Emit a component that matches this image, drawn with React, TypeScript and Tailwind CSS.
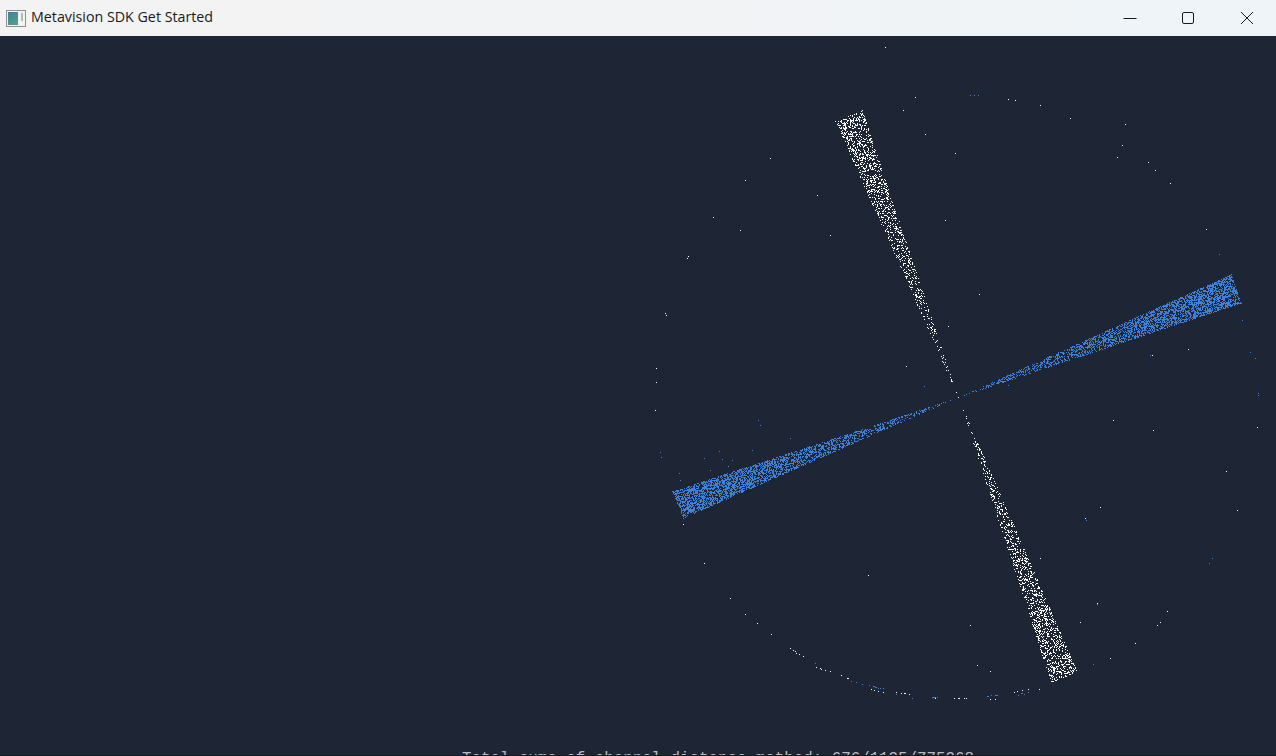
import { useMemo } from "react";

type Pt = [number, number];

const CENTER: Pt = [958, 397];

// stray events around the disc edge, read off the capture
const WHITE_DOTS: Pt[] = [
  [885, 47], [915, 97], [903, 110], [925, 134], [955, 153], [1008, 99], [1015, 100], [1040, 105], [1070, 118],
  [1125, 124], [1122, 145], [1117, 157], [1148, 162], [1155, 170], [1170, 183], [770, 158], [745, 180], [817, 195],
  [713, 217], [740, 230], [830, 235], [945, 220], [687, 258], [688, 256], [1206, 229], [665, 313], [666, 315], [656, 368],
  [656, 382], [655, 410], [979, 294], [948, 326], [906, 366], [1152, 355], [1188, 349], [1113, 420], [1153, 430],
  [1257, 427], [1226, 471], [1237, 510], [1100, 507], [1085, 518], [1040, 558], [868, 575], [704, 563], [683, 524],
  [730, 598], [745, 614], [757, 623], [771, 634], [970, 625], [1097, 603], [1160, 622], [1157, 625], [1167, 611],
  [1135, 643], [1110, 658], [1080, 622], [790, 648], [793, 650], [795, 651], [796, 653], [799, 654], [803, 656],
  [816, 667], [820, 668], [821, 669], [825, 670], [830, 671], [841, 675], [847, 678], [848, 678], [871, 689], [874, 690],
  [878, 691], [883, 692], [896, 692], [901, 693], [904, 693], [905, 693], [909, 694], [935, 698], [954, 698], [958, 698],
  [959, 698], [964, 698], [966, 698], [990, 699], [995, 699], [1014, 692], [1017, 691], [1022, 690], [1028, 689],
  [1039, 689], [977, 665], [990, 671],
];

const BLUE_DOTS: Pt[] = [
  [970, 95], [974, 95], [978, 95], [1250, 352], [1255, 358], [1258, 393], [1258, 395], [1242, 320], [1219, 254],
  [660, 452], [661, 457], [704, 458], [719, 451], [722, 459], [732, 460], [728, 466], [710, 470], [679, 473], [680, 480],
  [752, 450], [758, 420], [760, 425], [790, 438], [1212, 558], [1209, 563], [924, 386], [1008, 385], [1097, 604],
  [1093, 664], [815, 663], [851, 681], [856, 682], [862, 684], [869, 685], [873, 686], [874, 686], [875, 687], [876, 687],
  [878, 688], [880, 688], [883, 688], [896, 694], [912, 698], [932, 697], [933, 697], [934, 697], [935, 697], [937, 697],
  [987, 696], [988, 696], [991, 695], [995, 695], [996, 695], [997, 695], [1018, 695], [1021, 693], [1022, 693], [1024, 694],
  [1028, 692], [1150, 355], [1086, 520],
];

// small seeded generator so the noise is the same on every render
function makeRandom(seed: number) {
  let a = seed;
  return () => {
    a = (a + 0x6d2b79f5) | 0;
    let t = Math.imul(a ^ (a >>> 15), 1 | a);
    t = (t + Math.imul(t ^ (t >>> 7), 61 | t)) ^ t;
    return ((t ^ (t >>> 14)) >>> 0) / 4294967296;
  };
}

function inTriangle(p: Pt, a: Pt, b: Pt, c: Pt) {
  const side = (u: Pt, v: Pt) => (p[0] - v[0]) * (u[1] - v[1]) - (u[0] - v[0]) * (p[1] - v[1]);
  const d1 = side(a, b);
  const d2 = side(b, c);
  const d3 = side(c, a);
  return !((d1 < 0 || d2 < 0 || d3 < 0) && (d1 > 0 || d2 > 0 || d3 > 0));
}

function wedge(b: Pt, c: Pt, density: number, rand: () => number) {
  const pts: Pt[] = [];
  const xs = [CENTER[0], b[0], c[0]];
  const ys = [CENTER[1], b[1], c[1]];
  const len = Math.hypot(b[0] - CENTER[0], b[1] - CENTER[1]);
  for (let y = Math.min(...ys); y <= Math.max(...ys); y++) {
    for (let x = Math.min(...xs); x <= Math.max(...xs); x++) {
      if (!inTriangle([x, y], CENTER, b, c)) continue;
      // thins out towards the hub
      const t = Math.hypot(x - CENTER[0], y - CENTER[1]) / len;
      if (rand() < density * (0.5 + 0.5 * t)) pts.push([x, y]);
    }
  }
  return pts;
}

function toPath(pts: Pt[]) {
  return pts.map(([x, y]) => `M${x} ${y}h1v1h-1z`).join("");
}

function EventView() {
  const { white, blue } = useMemo(() => {
    const rand = makeRandom(1276);
    return {
      white: toPath([
        ...wedge([835, 121], [862, 110], 0.32, rand),
        ...wedge([1051, 683], [1077, 671], 0.32, rand),
        ...WHITE_DOTS,
      ]),
      blue: toPath([
        ...wedge([1231, 274], [1241, 303], 0.62, rand),
        ...wedge([672, 491], [683, 518], 0.62, rand),
        ...BLUE_DOTS,
      ]),
    };
  }, []);

  return (
    <svg className="block h-[715px] w-full shrink-0" viewBox="0 36 1276 715" shapeRendering="crispEdges">
      <path d={blue} fill="#3f80d8" />
      <path d={white} fill="#ffffff" />
    </svg>
  );
}

function AppIcon() {
  return (
    <svg width="20" height="17" viewBox="0 0 20 17" className="shrink-0">
      <defs>
        <linearGradient id="pane" x1="0" y1="0" x2="0.6" y2="1">
          <stop offset="0" stopColor="#3f7f9e" />
          <stop offset="1" stopColor="#4f9f86" />
        </linearGradient>
      </defs>
      <rect x="0.5" y="0.5" width="19" height="16" fill="#f2f2f2" stroke="#8f8f8f" />
      <rect x="2" y="2" width="10" height="13" fill="url(#pane)" />
      <rect x="15" y="3" width="2" height="8" fill="#9fc7b4" />
    </svg>
  );
}

export default function App() {
  return (
    <div className="flex h-screen w-full flex-col overflow-hidden bg-[#1e2636]">
      {/* Title bar */}
      <div className="flex h-9 shrink-0 items-center bg-gradient-to-r from-[#f3f3f3] via-[#f2f3f5] to-[#eef4f8] pl-[6px]">
        <AppIcon />
        <span className="ml-[5px] -translate-y-px font-['Open_Sans',sans-serif] text-[14.25px] text-[#1a1a1a]">Metavision SDK Get Started</span>
        <div className="ml-auto flex h-full items-center">
          <div className="flex h-full w-[58px] items-center justify-center">
            <svg width="14" height="14" viewBox="0 0 14 14" stroke="#1a1a1a" fill="none"><path d="M0.5 7.5h13" /></svg>
          </div>
          <div className="mr-px flex h-full w-[58px] items-center justify-center">
            <svg width="14" height="14" viewBox="0 0 14 14" stroke="#1a1a1a" fill="none"><rect x="1.5" y="1.5" width="11" height="11" rx="1.5" /></svg>
          </div>
          <div className="flex h-full w-[58px] items-center justify-center">
            <svg width="14" height="14" viewBox="0 0 14 14" stroke="#1a1a1a" fill="none"><path d="M1 1l12 12M13 1L1 13" /></svg>
          </div>
        </div>
      </div>

      <EventView />

      {/* Console line, cut off by the window edge */}
      <div className="h-[4px] shrink-0 overflow-hidden pl-[462px]">
        <p className="whitespace-nowrap font-['Liberation_Mono',monospace] text-[15.8px] leading-[16px] text-[#b9bcc2]">
          Total sums of channel distance method: 676/1135/775268
        </p>
      </div>
      <div className="h-px shrink-0 bg-[#14181f]" />
    </div>
  );
}
